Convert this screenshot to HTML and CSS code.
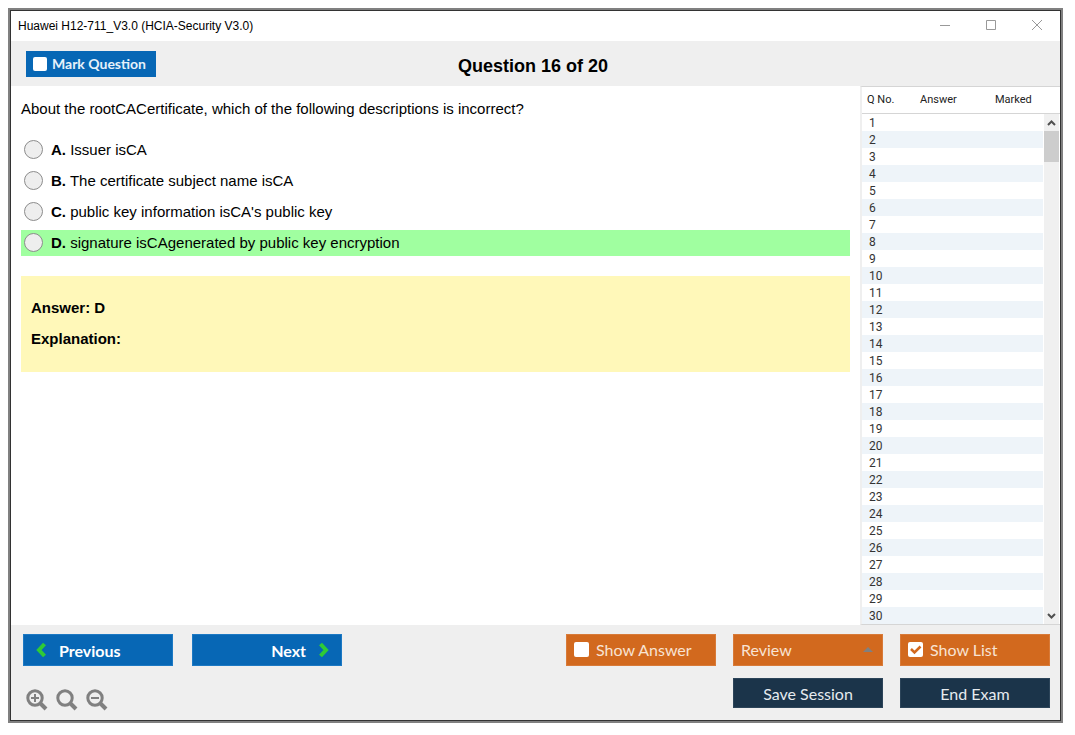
FILE: index.html
```
<!DOCTYPE html>
<html lang="en">
<head>
    <meta charset="UTF-8">
    <title>Huawei H12-711_V3.0 (HCIA-Security V3.0)</title>
    <link rel="stylesheet" href="styles.css">
</head>
<body>
    <div class="window">
        <!-- Title bar -->
        <header class="titlebar">
            <span class="titlebar-text">Huawei H12-711_V3.0 (HCIA-Security V3.0)</span>
            <div class="window-controls">
                <button type="button" aria-label="Minimize"><svg width="12" height="12" viewBox="0 0 12 12"><path d="M1 5.500h10"/></svg></button>
                <button type="button" aria-label="Maximize"><svg width="12" height="12" viewBox="0 0 12 12"><path d="M1.500 .5h9v9h-9z"/></svg></button>
                <button type="button" aria-label="Close"><svg width="12" height="12" viewBox="0 0 12 12"><path d="M1 0l10 10M11 0L1 10"/></svg></button>
            </div>
        </header>

        <!-- Question header -->
        <div class="topbar">
            <label class="mark-btn"><input type="checkbox" class="check"> Mark Question</label>
            <h1>Question 16 of 20</h1>
        </div>

        <div class="content">
            <main class="question">
                <p class="question-text">About the rootCACertificate, which of the following descriptions is incorrect?</p>
                <div class="choices">
                    <label class="choice"><input type="radio" name="choice"><span><b>A.</b> Issuer isCA</span></label>
                    <label class="choice"><input type="radio" name="choice"><span><b>B.</b> The certificate subject name isCA</span></label>
                    <label class="choice"><input type="radio" name="choice"><span><b>C.</b> public key information isCA's public key</span></label>
                    <label class="choice correct"><input type="radio" name="choice"><span><b>D.</b> signature isCAgenerated by public key encryption</span></label>
                </div>
                <div class="answer-box">
                    <p>Answer: D</p>
                    <p>Explanation:</p>
                </div>
            </main>

            <!-- Question list -->
            <aside class="list">
                <table>
                    <thead>
                        <tr><th class="col-no">Q No.</th><th class="col-answer">Answer</th><th class="col-marked">Marked</th></tr>
                    </thead>
                    <tbody>
                        <tr><td>1</td><td></td><td></td></tr>
                        <tr><td>2</td><td></td><td></td></tr>
                        <tr><td>3</td><td></td><td></td></tr>
                        <tr><td>4</td><td></td><td></td></tr>
                        <tr><td>5</td><td></td><td></td></tr>
                        <tr><td>6</td><td></td><td></td></tr>
                        <tr><td>7</td><td></td><td></td></tr>
                        <tr><td>8</td><td></td><td></td></tr>
                        <tr><td>9</td><td></td><td></td></tr>
                        <tr><td>10</td><td></td><td></td></tr>
                        <tr><td>11</td><td></td><td></td></tr>
                        <tr><td>12</td><td></td><td></td></tr>
                        <tr><td>13</td><td></td><td></td></tr>
                        <tr><td>14</td><td></td><td></td></tr>
                        <tr><td>15</td><td></td><td></td></tr>
                        <tr><td>16</td><td></td><td></td></tr>
                        <tr><td>17</td><td></td><td></td></tr>
                        <tr><td>18</td><td></td><td></td></tr>
                        <tr><td>19</td><td></td><td></td></tr>
                        <tr><td>20</td><td></td><td></td></tr>
                        <tr><td>21</td><td></td><td></td></tr>
                        <tr><td>22</td><td></td><td></td></tr>
                        <tr><td>23</td><td></td><td></td></tr>
                        <tr><td>24</td><td></td><td></td></tr>
                        <tr><td>25</td><td></td><td></td></tr>
                        <tr><td>26</td><td></td><td></td></tr>
                        <tr><td>27</td><td></td><td></td></tr>
                        <tr><td>28</td><td></td><td></td></tr>
                        <tr><td>29</td><td></td><td></td></tr>
                        <tr><td>30</td><td></td><td></td></tr>
                    </tbody>
                </table>
                <div class="scrollbar">
                    <button type="button" aria-label="Scroll up"><svg width="9" height="6" viewBox="0 0 9 6"><path d="M1 5l3.500-3.500L8 5"/></svg></button>
                    <div class="scroll-track"><div class="scroll-thumb"></div></div>
                    <button type="button" aria-label="Scroll down"><svg width="9" height="6" viewBox="0 0 9 6"><path d="M1 1l3.500 3.500L8 1"/></svg></button>
                </div>
            </aside>
        </div>

        <!-- Bottom controls -->
        <footer class="footer">
            <div class="footer-left">
                <div class="nav-buttons">
                    <button type="button" class="btn btn-nav">
                        <svg width="10" height="16" viewBox="0 0 10 16"><path d="M8.500 2L3 8l5.500 6"/></svg>
                        Previous
                    </button>
                    <button type="button" class="btn btn-nav next">
                        Next
                        <svg width="10" height="16" viewBox="0 0 10 16"><path d="M1.500 2L7 8l-5.500 6"/></svg>
                    </button>
                </div>
                <div class="zoom-buttons">
                    <button type="button" aria-label="Zoom in"><svg width="22" height="22" viewBox="0 0 22 22"><circle cx="9" cy="9" r="7.200"/><path class="handle" d="M14 14l6 6"/><path class="sign" d="M5 9h8M9 5v8"/></svg></button>
                    <button type="button" aria-label="Reset zoom"><svg width="22" height="22" viewBox="0 0 22 22"><circle cx="9" cy="9" r="7.200"/><path class="handle" d="M14 14l6 6"/></svg></button>
                    <button type="button" aria-label="Zoom out"><svg width="22" height="22" viewBox="0 0 22 22"><circle cx="9" cy="9" r="7.200"/><path class="handle" d="M14 14l6 6"/><path class="sign" d="M5 9h8"/></svg></button>
                </div>
            </div>
            <div class="footer-right">
                <label class="btn btn-option"><input type="checkbox" class="check"> Show Answer</label>
                <div class="review">
                    <select class="btn btn-option" aria-label="Review">
                        <option>Review</option>
                    </select>
                    <span class="review-arrow"></span>
                </div>
                <label class="btn btn-option"><input type="checkbox" class="check" checked> Show List</label>
                <button type="button" class="btn btn-session save">Save Session</button>
                <button type="button" class="btn btn-session">End Exam</button>
            </div>
        </footer>
    </div>
</body>
</html>
```
FILE: styles.css
```
* {
    box-sizing: border-box;
    margin: 0;
    padding: 0;
}

body {
    min-height: 100vh;
    padding: 8px 12px 12px 8px;
    display: flex;
    background: #fff;
    color: #000;
    font-family: "Liberation Sans", Arial, sans-serif;
    font-size: 15px;
}

button {
    border: none;
    background: none;
    font: inherit;
    cursor: pointer;
}

svg {
    display: block;
    fill: none;
}

.window {
    flex: 1;
    display: flex;
    flex-direction: column;
    border: 2px solid #808080;
    outline: 1px solid #333;
    outline-offset: -3px;
    padding: 1px;
}

/* Title bar */
.titlebar {
    height: 30px;
    padding-left: 7px;
    display: flex;
    align-items: center;
    justify-content: space-between;
    font-size: 12px;
}

.window-controls {
    display: flex;
}

.window-controls button {
    width: 46px;
    height: 28px;
    display: flex;
    align-items: center;
    justify-content: center;
}

.window-controls path {
    stroke: #999;
}

/* Question header */
.topbar {
    height: 45px;
    padding: 0 15px;
    display: grid;
    grid-template-columns: 1fr auto 1fr;
    align-items: center;
    background: #efefef;
}

.topbar h1 {
    padding: 5px 5px 0 0;
    font-size: 18px;
}

.mark-btn {
    width: 130px;
    height: 26px;
    padding-left: 7px;
    display: flex;
    align-items: center;
    gap: 5px;
    background: #0767b5;
    color: #e6f1fa;
    font: bold 14px Lato, sans-serif;
}

.check {
    appearance: none;
    width: 14px;
    height: 14px;
    border-radius: 2px;
    background: #fff;
}

/* Main area */
.content {
    flex: 1;
    display: flex;
}

.question {
    flex: 1;
    padding: 10px;
}

.question-text {
    line-height: 26px;
    margin-bottom: 15px;
}

.choices {
    display: flex;
    flex-direction: column;
    gap: 5px;
}

.choice {
    height: 26px;
    padding: 0 0 2px 3px;
    display: flex;
    align-items: center;
    gap: 8px;
}

.choice input {
    appearance: none;
    width: 19px;
    height: 19px;
    border: 1px solid #8c8c8c;
    border-radius: 50%;
    background: #eee;
}

.choice.correct {
    background: #a0ffa0;
}

.answer-box {
    margin-top: 20px;
    padding: 16px 10px 18px;
    background: #fff8b9;
    font-weight: bold;
    line-height: 31px;
}

/* Question list */
.list {
    width: 200px;
    display: flex;
    position: relative;
    border-left: 2px solid #efefef;
    border-top: 1px solid #d5d5d5;
    border-bottom: 1px solid #d5d5d5;
}

.list table {
    width: 100%;
    border-collapse: collapse;
    table-layout: fixed;
    font: 12px Roboto, sans-serif;
    color: #333;
}

.list th {
    height: 26px;
    border-bottom: 1px solid #d5d5d5;
    font-size: 11px;
    font-weight: normal;
    text-align: left;
    color: #222;
}

.list .col-no {
    width: 58px;
    padding-left: 5px;
}

.col-answer {
    width: 75px;
}

.list td {
    height: 17px;
    padding: 1px 0 0 7px;
    line-height: 16px;
}

.list tbody tr:nth-child(even) {
    background: #eef4f9;
}

/* overlies the rows, below the table head */
.scrollbar {
    position: absolute;
    top: 27px;
    right: 0;
    bottom: 0;
    width: 17px;
    border: solid #fff;
    border-width: 0 1px;
    display: flex;
    flex-direction: column;
    background: #f0f0f0;
}

.scrollbar button {
    height: 17px;
    display: flex;
    align-items: center;
    justify-content: center;
}

.scrollbar path {
    stroke: #505050;
    stroke-width: 2;
}

.scroll-track {
    flex: 1;
}

.scroll-thumb {
    height: 31px;
    background: #cdcdcd;
}

/* Bottom controls */
.footer {
    padding: 9px 10px 9px 12px;
    display: flex;
    justify-content: space-between;
    background: #efefef;
}

.btn {
    width: 150px;
    height: 32px;
    border: 1px solid;
    border-radius: 0;
    font: 16px Lato, sans-serif;
}

.nav-buttons {
    display: flex;
    gap: 19px;
}

.btn-nav {
    padding: 0 12px;
    display: flex;
    align-items: center;
    gap: 13px;
    background: #0767b5;
    border-color: #1c79c4;
    color: #fff;
    font-weight: bold;
}

.btn-nav.next {
    justify-content: flex-end;
}

.btn-nav path {
    stroke: #2fcb35;
    stroke-width: 4;
}

.zoom-buttons {
    margin-top: 23px;
    padding-left: 3px;
    display: flex;
    gap: 8px;
}

.zoom-buttons svg {
    stroke: #808080;
    stroke-width: 3;
}

.zoom-buttons .handle {
    stroke-width: 4;
}

.zoom-buttons .sign {
    stroke-width: 2;
}

.footer-right {
    display: grid;
    grid-template-columns: repeat(3, 150px);
    align-content: start;
    gap: 12px 17px;
}

.btn-option {
    padding: 0 0 1px 7px;
    display: flex;
    align-items: center;
    gap: 7px;
    background: #d2691e;
    border-color: #d87a38;
    color: #f8e3d3;
}

.btn-option .check {
    width: 15px;
    height: 15px;
}

.btn-option .check:checked {
    background: #fff url("data:image/svg+xml,%3Csvg xmlns='http://www.w3.org/2000/svg' viewBox='0 0 15 15'%3E%3Cpath d='M3 7l3.500 3.500L12.500 4.500' fill='none' stroke='%23d2691e' stroke-width='2.500'/%3E%3C/svg%3E");
}

.review {
    position: relative;
}

.review select {
    appearance: none;
}

/* sits on the drop-down */
.review-arrow {
    position: absolute;
    right: 10px;
    top: 13px;
    border: 5px solid transparent;
    border-top: none;
    border-bottom-color: #808080;
    pointer-events: none;
}

.btn-session {
    height: 30px;
    background: #1b344a;
    border-color: #2c4459;
    color: #e6ebef;
}

.save {
    grid-column: 2;
}
```
